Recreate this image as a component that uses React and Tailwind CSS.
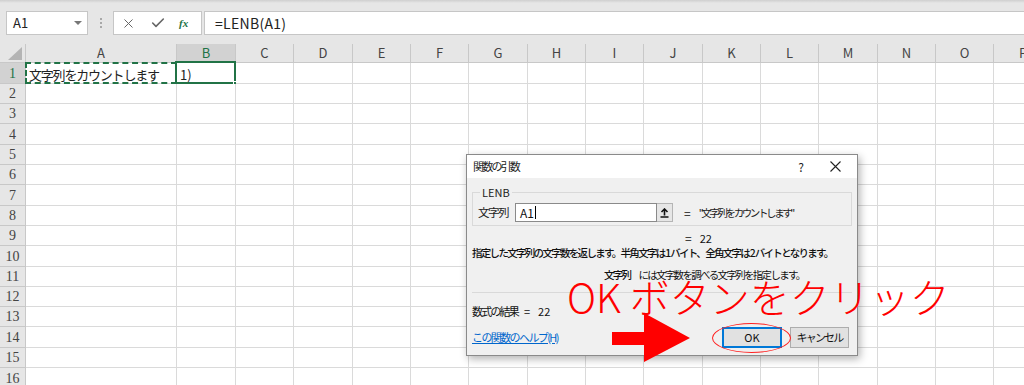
import { X, Check } from "lucide-react"

const cols = [
  { id: "A", w: "w-[151px]" },
  { id: "B", w: "w-[59px]" },
  { id: "C", w: "w-[58px]" },
  { id: "D", w: "w-[59px]" },
  { id: "E", w: "w-[58px]" },
  { id: "F", w: "w-[58px]" },
  { id: "G", w: "w-[59px]" },
  { id: "H", w: "w-[58px]" },
  { id: "I", w: "w-[58px]" },
  { id: "J", w: "w-[59px]" },
  { id: "K", w: "w-[58px]" },
  { id: "L", w: "w-[58px]" },
  { id: "M", w: "w-[59px]" },
  { id: "N", w: "w-[58px]" },
  { id: "O", w: "w-[58px]" },
  { id: "P", w: "w-[59px]" },
]

const rowHeights = [
  "h-[21px]", "h-[20px]", "h-[20px]", "h-[21px]", "h-[20px]", "h-[20px]", "h-[21px]", "h-[20px]",
  "h-[20px]", "h-[21px]", "h-[20px]", "h-[20px]", "h-[20px]", "h-[21px]", "h-[20px]", "h-[21px]",
]

const jp = "font-['Noto_Sans_CJK_JP','Noto_Sans',sans-serif]"

function FormulaBar() {
  return (
    <div className="h-[44px] pt-[11px] flex items-start">
      <div className="ml-[6px] w-[82px] h-[24px] bg-white border border-[#c6c6c6] flex items-center pl-[6px] pr-[5px] text-[13px] text-[#222]">
        <span className="flex-1">A1</span>
        <svg width="8" height="5" viewBox="0 0 8 5">
          <path d="M0 0 L8 0 L4 4 Z" fill="#777" />
        </svg>
      </div>
      <div className="w-[25px] h-[24px] flex flex-col items-center justify-center gap-[2px]">
        <span className="w-[2px] h-[2px] bg-[#a8a8a8]" />
        <span className="w-[2px] h-[2px] bg-[#a8a8a8]" />
        <span className="w-[2px] h-[2px] bg-[#a8a8a8]" />
      </div>
      <div className="w-[89px] h-[24px] bg-white border border-[#c6c6c6] flex items-center">
        <X size={15} strokeWidth={1.6} className="ml-[7px] text-[#666]" />
        <Check size={16} strokeWidth={2.4} className="ml-[14px] text-[#666]" />
        <span className="ml-[13px] text-[11px] italic font-bold text-[#217346] font-['Liberation_Serif',serif]">fx</span>
      </div>
      <div className="ml-[2px] flex-1 h-[24px] bg-white border border-[#c6c6c6] border-r-0 flex items-center pl-[10px] text-[14px] tracking-[0.3px] text-[#222]">
        =LENB(A1)
      </div>
    </div>
  )
}

function HeaderRow() {
  return (
    <div className="flex h-[19px]">
      <div className="w-[26px] shrink-0 bg-[#e6e6e6] border-r border-b border-[#c8c8c8] relative">
        <svg className="absolute left-[8px] top-[3px]" width="14" height="13" viewBox="0 0 14 13">
          <path d="M14 0 L14 13 L0 13 Z" fill="#b4b4b4" />
        </svg>
      </div>
      {cols.map((c) => (
        <div
          key={c.id}
          className={`${c.w} shrink-0 flex items-center justify-center text-[13px] border-r border-b border-[#c8c8c8] ${
            c.id === "B" ? "bg-[#d2d2d2] text-[#217346]" : "bg-[#e6e6e6] text-[#444]"
          }`}
        >
          {c.id}
        </div>
      ))}
    </div>
  )
}

function Grid() {
  return (
    <div>
      <HeaderRow />
      {rowHeights.map((h, i) => (
        <div key={i} className={`flex ${h}`}>
          <div
            className={`w-[26px] shrink-0 border-r border-b border-[#c8c8c8] flex items-center justify-center text-[14px] font-['Liberation_Serif',serif] ${
              i === 0 ? "bg-[#d2d2d2] text-[#217346]" : "bg-[#e6e6e6] text-[#444]"
            }`}
          >
            {i + 1}
          </div>
          {cols.map((c) => (
            <div key={c.id} className={`${c.w} shrink-0 bg-white border-r border-b border-[#dadada] relative`}>
              {i === 0 && c.id === "A" && (
                <>
                  <div className="absolute -left-px -top-px -right-px -bottom-px border-2 border-dashed border-[#217346]" />
                  <span className="absolute left-[3px] top-[2px] text-[13px] tracking-[-1.2px] text-[#222] whitespace-nowrap">文字列をカウントします</span>
                </>
              )}
              {i === 0 && c.id === "B" && (
                <>
                  <div className="absolute -left-[2px] -top-[2px] -right-px -bottom-px border-2 border-[#217346]" />
                  <div className="absolute -right-[4px] -bottom-[4px] w-[6px] h-[6px] bg-[#217346] border border-white" />
                  <span className="absolute left-[3px] top-[2px] text-[13px] text-[#222]">1)</span>
                </>
              )}
            </div>
          ))}
        </div>
      ))}
    </div>
  )
}

function Dialog() {
  return (
    <div className="absolute left-[466px] top-[154px] w-[392px] h-[202px] bg-[#f0f0f0] border border-[#8a8a8a] shadow-[2px_3px_8px_rgba(0,0,0,0.3)] text-[11px] text-[#111]">
      <div className="h-[23px] bg-white flex items-center pl-[6px] text-[11px] text-[#222]">
        <span className="flex-1 tracking-[-1.8px]">関数の引数</span>
        <span className="w-[20px] text-center text-[12px] mr-[19px]">?</span>
        <svg width="11" height="11" viewBox="0 0 11 11" className="mr-[16px]">
          <path d="M0.5 0.5 L10.5 10.5 M10.5 0.5 L0.5 10.5" stroke="#222" strokeWidth="1.1" />
        </svg>
      </div>
      <div className="px-[5px] pt-[8px]">
        <fieldset className="border border-[#d9d9d9] pl-[5px] pr-[5px] pb-[3px] h-[40px]">
          <legend className="ml-[2px] px-[2px] text-[11px] leading-[12px] text-[#222]">LENB</legend>
          <div className="flex items-center mt-[5px] h-[19px]">
            <span className="w-[37px] text-[11.5px] tracking-[-1.5px] text-[#222]">文字列</span>
            <div className="w-[142px] h-[19px] bg-white border border-[#8a8a8a] flex items-center pl-[4px] text-[12px] text-[#111]">
              A1<span className="w-px h-[13px] bg-black ml-[1px]" />
            </div>
            <div className="w-[16px] h-[19px] bg-[#e6e6e6] border border-[#b5b5b5] border-l-0 flex items-center justify-center">
              <svg width="9" height="10" viewBox="0 0 9 10">
                <path d="M4.5 1 L4.5 7.5 M1.5 4 L4.5 1 L7.5 4 M0.5 9 L8.5 9" stroke="#111" strokeWidth="1.6" fill="none" />
              </svg>
            </div>
            <span className="ml-[11px] text-[12px]">=</span>
            <span className="ml-[8px] text-[10.5px] tracking-[-2.4px] text-[#222] whitespace-nowrap">"文字列をカウントします"</span>
          </div>
        </fieldset>
        <div className="mt-[5px] h-[14px] flex items-center pl-[213px] text-[12px]">
          <span>=</span>
          <span className="ml-[8px] text-[11px]">22</span>
        </div>
        <div className="mt-[1px] h-[14px] flex items-center whitespace-nowrap font-medium text-[10.5px] tracking-[-1.7px]">
          指定した文字列の文字数を返します。半角文字は 1 バイト、全角文字は 2 バイトとなります。
        </div>
        <div className="mt-[8px] h-[14px] flex items-center pl-[132px] whitespace-nowrap text-[10.5px] tracking-[-1.7px]">
          <span className="font-medium">文字列</span>
          <span className="ml-[8px]">には文字数を調べる文字列を指定します。</span>
        </div>
        <div className="mt-[10px] h-px bg-[#d9d9d9]" />
        <div className="mt-[11px] h-[14px] flex items-center">
          <span className="tracking-[-1.8px]">数式の結果</span>
          <span className="ml-[6px]">=</span>
          <span className="ml-[8px]">22</span>
        </div>
        <div className="mt-[9px] flex items-center">
          <span className="flex-1 text-[#0066cc] underline tracking-[-1.6px] whitespace-nowrap">この関数のヘルプ(H)</span>
          <button className="w-[60px] h-[21px] bg-[#e1e1e1] border-2 border-[#0078d7] text-[11px] text-[#111]">OK</button>
          <button className="ml-[8px] mr-[3px] w-[59px] h-[21px] bg-[#e1e1e1] border border-[#adadad] text-[11px] tracking-[-1.8px] text-[#111]">キャンセル</button>
        </div>
      </div>
    </div>
  )
}

function Annotation() {
  return (
    <>
      <div className={`absolute left-[567px] top-[276px] text-[40px] leading-[40px] text-[#ff0000] whitespace-nowrap font-light ${jp}`}>
        OK ボタンをクリック
      </div>
      <div className="absolute left-[712px] top-[323px] w-[79px] h-[30px] rounded-[50%] border border-[#ff2020]" />
      <svg className="absolute left-[612px] top-[313px]" width="80" height="50" viewBox="0 0 80 50">
        <path d="M0 19 L33 19 L33 32 L0 32 Z M32 0 L78 25 L32 49 Z" fill="#ff0000" />
      </svg>
    </>
  )
}

export default function App() {
  return (
    <div className={`w-[1024px] h-[385px] overflow-hidden bg-[#e6e6e6] relative ${jp}`}>
      <div className="h-[3px] bg-gradient-to-b from-[#cfcfcf] to-[#e6e6e6] absolute top-0 left-0 right-0" />
      <FormulaBar />
      <Grid />
      <Dialog />
      <Annotation />
    </div>
  )
}
